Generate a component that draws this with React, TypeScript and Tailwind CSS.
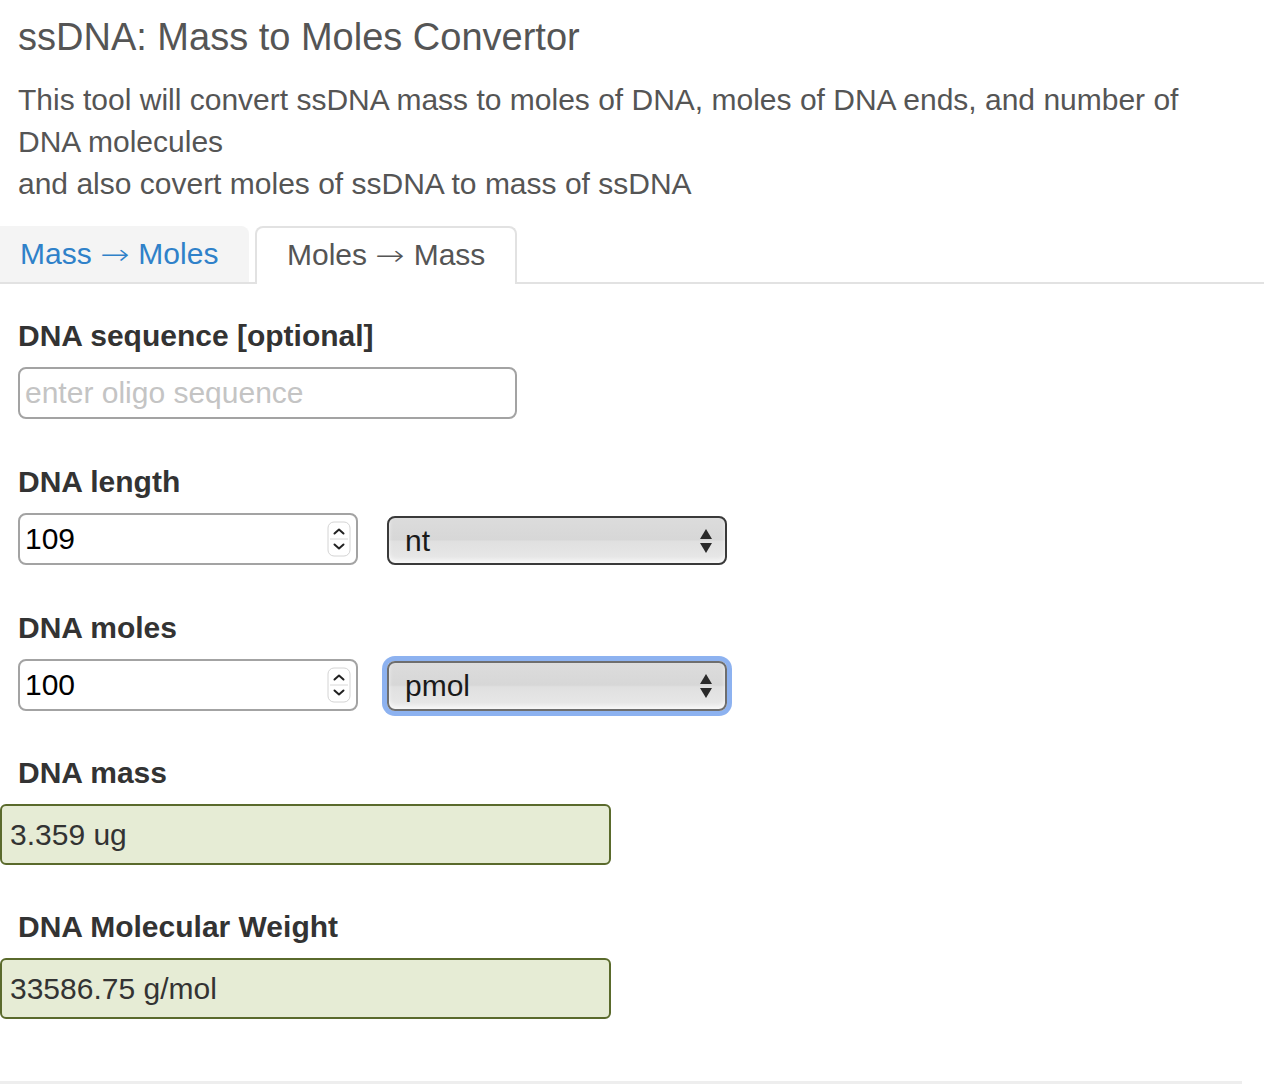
import React from "react";

function Spinner() {
  return (
    <svg width="24" height="36" viewBox="0 0 24 36" className="shrink-0">
      <rect x="1" y="1" width="22" height="34" rx="6" fill="#fff" stroke="#d4d4d4" strokeWidth="1" />
      <line x1="3" y1="18" x2="21" y2="18" stroke="#d8d8d8" strokeWidth="1" />
      <path d="M7.5 12.5 L12 8.5 L16.5 12.5" fill="none" stroke="#222" strokeWidth="2" strokeLinecap="round" strokeLinejoin="round" />
      <path d="M7.5 23.5 L12 27.5 L16.5 23.5" fill="none" stroke="#222" strokeWidth="2" strokeLinecap="round" strokeLinejoin="round" />
    </svg>
  );
}

function SelectArrows() {
  return (
    <svg width="14" height="28" viewBox="0 0 14 28" className="shrink-0">
      <path d="M1 12 L7 2 L13 12 Z" fill="#2a2a2a" />
      <path d="M1 16 L7 26 L13 16 Z" fill="#2a2a2a" />
    </svg>
  );
}

function Arrow() {
  return (
    <span className="inline-block w-[30px] text-center font-['DejaVu_Sans',sans-serif] text-[28px] scale-x-[1.25] font-extralight">
      →
    </span>
  );
}

function NumberBox({ value }: { value: string }) {
  return (
    <div className="w-[340px] h-[52px] border-2 border-[#a3a3a3] rounded-[8px] bg-white flex items-center pl-[5px] pr-[5px]">
      <span className="flex-1 text-black">{value}</span>
      <Spinner />
    </div>
  );
}

function SelectBox({ value, focused }: { value: string; focused?: boolean }) {
  return (
    <div
      className={
        focused
          ? "mt-[2px] ml-[29px] w-[340px] h-[50px] rounded-[8px] border-2 border-[#6e6e6e] ring-[5px] ring-[#8db2f0] flex items-center pl-[16px] pr-[12px] text-black bg-[linear-gradient(to_bottom,#dcdcdc_0%,#d7d7d7_48%,#e0e0e0_52%,#e9e9e9_100%)] shadow-[inset_0_-3px_4px_rgba(255,255,255,0.7)]"
          : "mt-[3px] ml-[29px] w-[340px] h-[49px] rounded-[8px] border-2 border-[#3a3a3a] flex items-center pl-[16px] pr-[12px] text-black bg-[linear-gradient(to_bottom,#dcdcdc_0%,#d7d7d7_48%,#e0e0e0_52%,#e9e9e9_100%)] shadow-[inset_0_-3px_4px_rgba(255,255,255,0.7)]"
      }
    >
      <span className="flex-1 text-[#1a1a1a]">{value}</span>
      <SelectArrows />
    </div>
  );
}

function OutputBox({ value }: { value: string }) {
  return (
    <div className="-ml-[18px] w-[611px] h-[61px] bg-[#e6ecd5] border-2 border-[#5a6a2c] rounded-[6px] flex items-center pl-[8px] text-[#333]">
      {value}
    </div>
  );
}

export default function App() {
  return (
    <div className="w-[1264px] min-h-[1084px] bg-white font-['Liberation_Sans',Arial,Helvetica,sans-serif] text-[30px] leading-[42px] text-[#555] overflow-hidden">
      <div className="pl-[18px]">
        <h1 className="pt-[16px] text-[38px] leading-[42px] font-normal text-[#555]">
          ssDNA: Mass to Moles Convertor
        </h1>
        <p className="mt-[21px] text-[#555]">
          This tool will convert ssDNA mass to moles of DNA, moles of DNA ends, and number of
          <br />
          DNA molecules
          <br />
          and also covert moles of ssDNA to mass of ssDNA
        </p>
      </div>

      <div className="mt-[21px] flex border-b-2 border-[#e2e2e2] h-[58px]">
        <div className="w-[249px] h-[56px] bg-[#f4f4f4] rounded-tr-[8px] pl-[20px] pt-[7px] text-[#2f81c9] whitespace-nowrap">
          Mass <Arrow /> Moles
        </div>
        <div className="ml-[6px] w-[262px] h-[58px] -mb-[2px] bg-white border-2 border-b-0 border-[#e2e2e2] rounded-t-[8px] pl-[30px] pt-[6px] text-[#555] whitespace-nowrap">
          Moles <Arrow /> Mass
        </div>
      </div>

      <div className="pl-[18px] pt-[31px]">
        <div className="font-bold text-[#333]">DNA sequence [optional]</div>
        <div className="mt-[10px] w-[499px] h-[52px] border-2 border-[#a3a3a3] rounded-[8px] bg-white flex items-center pl-[5px] text-[#c4c4c4]">
          enter oligo sequence
        </div>

        <div className="mt-[42px] font-bold text-[#333]">DNA length</div>
        <div className="mt-[10px] flex items-start">
          <NumberBox value="109" />
          <SelectBox value="nt" />
        </div>

        <div className="mt-[42px] font-bold text-[#333]">DNA moles</div>
        <div className="mt-[10px] flex items-start">
          <NumberBox value="100" />
          <SelectBox value="pmol" focused />
        </div>

        <div className="mt-[41px] font-bold text-[#333]">DNA mass</div>
        <div className="mt-[10px]">
          <OutputBox value="3.359 ug" />
        </div>

        <div className="mt-[41px] font-bold text-[#333]">DNA Molecular Weight</div>
        <div className="mt-[10px]">
          <OutputBox value="33586.75 g/mol" />
        </div>
      </div>

      <div className="mt-[62px] w-[1242px] border-t-[3px] border-[#eeeeee]" />
    </div>
  );
}
